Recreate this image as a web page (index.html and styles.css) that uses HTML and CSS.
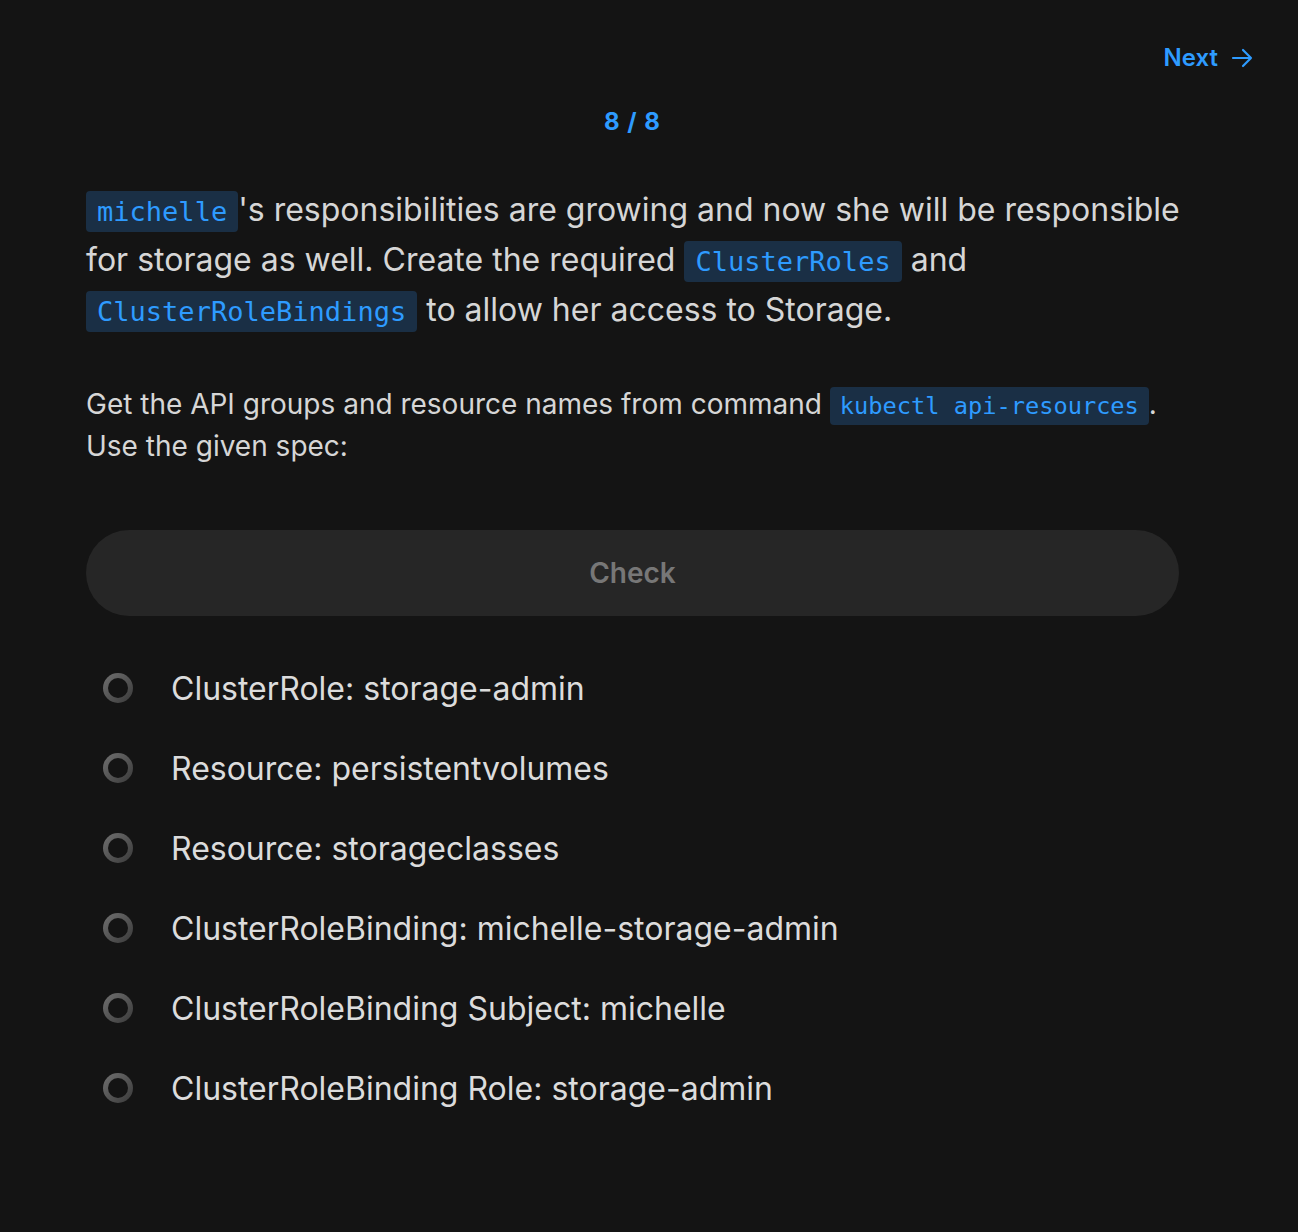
FILE: index.html
```html
<!DOCTYPE html>
<html>
<head>
<meta charset="utf-8">
<link rel="stylesheet" href="styles.css">
</head>
<body>
<div class="page">
  <div class="topbar">
    <a class="next" href="#">Next
      <svg class="arrow" width="24" height="24" viewBox="0 0 24 24" fill="none" stroke="currentColor" stroke-width="2.2" stroke-linecap="round" stroke-linejoin="round"><path d="M3 12h18M13 4l8 8-8 8"/></svg>
    </a>
  </div>
  <div class="content">
    <div class="counter">8 / 8</div>
    <p class="lead"><code>michelle</code>'s responsibilities are growing and now she will be responsible for storage as well. Create the required <code>ClusterRoles</code> and <code>ClusterRoleBindings</code> to allow her access to Storage.</p>
    <p class="hint">Get the API groups and resource names from command <code>kubectl api-resources</code>.<br>Use the given spec:</p>
    <button class="check">Check</button>
    <ul class="tasks">
      <li><span class="radio"></span>ClusterRole: storage-admin</li>
      <li><span class="radio"></span>Resource: persistentvolumes</li>
      <li><span class="radio"></span>Resource: storageclasses</li>
      <li><span class="radio"></span>ClusterRoleBinding: michelle-storage-admin</li>
      <li><span class="radio"></span>ClusterRoleBinding Subject: michelle</li>
      <li><span class="radio"></span>ClusterRoleBinding Role: storage-admin</li>
    </ul>
  </div>
</div>
</body>
</html>
```
FILE: styles.css
```css
html, body {
  margin: 0;
  padding: 0;
  background: #141414;
}
body {
  font-family: Inter, "Noto Sans", sans-serif;
  color: #d6d6d6;
  min-height: 1232px;
}
.page {
  padding: 40px 44px 60px 86px;
}
.topbar {
  display: flex;
  justify-content: flex-end;
  height: 36px;
}
.next {
  display: flex;
  align-items: center;
  gap: 12px;
  color: #2e9bff;
  text-decoration: none;
  font-weight: 600;
  font-size: 24px;
  line-height: 36px;
}
.arrow {
  display: block;
}
.content {
  width: 1093px;
}
.counter {
  text-align: center;
  color: #2e9bff;
  font-weight: 700;
  font-size: 24px;
  line-height: 30px;
  margin-top: 31px;
  letter-spacing: 1px;
}
code {
  font-family: "DejaVu Sans Mono", monospace;
  font-size: 0.845em;
  line-height: 1;
  color: #2e9bff;
  background: #1a2f45;
  border-radius: 4px;
  padding: 5px 11px;
}
.lead {
  font-size: 32px;
  line-height: 50px;
  margin: 48px -30px 0 0;
}
.hint {
  font-size: 28px;
  line-height: 42px;
  margin: 48px -30px 0 0;
}
.hint code {
  padding: 5px 10px;
}
.check {
  display: block;
  width: 100%;
  height: 86px;
  margin-top: 63px;
  border: none;
  border-radius: 43px;
  background: #262626;
  color: #777777;
  font-family: Inter, "Noto Sans", sans-serif;
  font-weight: 600;
  font-size: 28px;
}
.tasks {
  list-style: none;
  margin: 32px 0 0;
  padding: 0;
}
.tasks li {
  display: flex;
  align-items: center;
  height: 80px;
  font-size: 32px;
  color: #dcdcdc;
}
.radio {
  box-sizing: border-box;
  width: 30px;
  height: 30px;
  margin-left: 17px;
  margin-right: 38px;
  border-radius: 50%;
  background: linear-gradient(135deg, #707070, #3a3a3a);
  position: relative;
  flex: none;
}
.radio::after {
  content: "";
  position: absolute;
  inset: 5px;
  border-radius: 50%;
  background: #141414;
}
```
